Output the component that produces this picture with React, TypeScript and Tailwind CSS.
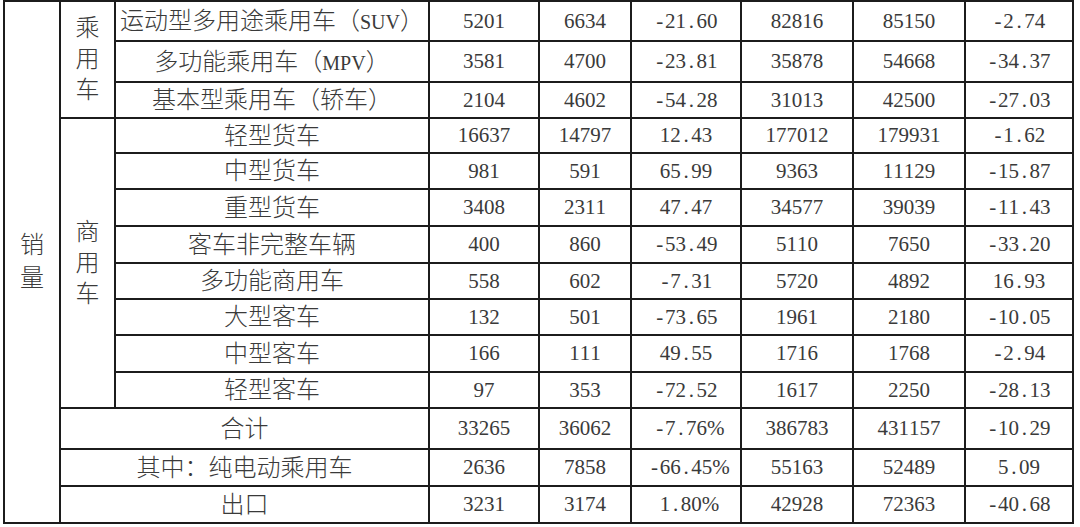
import React from 'react'

type Row = {
    label: React.ReactNode;
    values: string[];
    h: string;
};

// SimSun style half-width: every ascii char takes the same width
function Num({ v }: { v: string }) {
    return (
        <span className="inline-flex">
            {v.split('').map((c, i) => (
                <span key={i} className="inline-block w-[10.5px] text-center">
                    {c}
                </span>
            ))}
        </span>
    )
}

function Stack({ text, lh }: { text: string; lh: string }) {
    return (
        <div className={`flex flex-col items-center ${lh}`}>
            {text.split('').map((c, i) => (
                <span key={i}>{c}</span>
            ))}
        </div>
    )
}

const Latin = ({ t }: { t: string }) => <span className="text-[20px]">{t}</span>

const passenger: Row[] = [
    { label: <>运动型多用途乘用车（<Latin t="SUV" />）</>, values: ['5201', '6634', '-21.60', '82816', '85150', '-2.74'], h: 'h-[40px]' },
    { label: <>多功能乘用车（<Latin t="MPV" />）</>, values: ['3581', '4700', '-23.81', '35878', '54668', '-34.37'], h: 'h-[41px]' },
    { label: <>基本型乘用车（轿车）</>, values: ['2104', '4602', '-54.28', '31013', '42500', '-27.03'], h: 'h-[36px]' },
]

const commercial: Row[] = [
    { label: '轻型货车', values: ['16637', '14797', '12.43', '177012', '179931', '-1.62'], h: 'h-[35px]' },
    { label: '中型货车', values: ['981', '591', '65.99', '9363', '11129', '-15.87'], h: 'h-[36px]' },
    { label: '重型货车', values: ['3408', '2311', '47.47', '34577', '39039', '-11.43'], h: 'h-[37px]' },
    { label: '客车非完整车辆', values: ['400', '860', '-53.49', '5110', '7650', '-33.20'], h: 'h-[37px]' },
    { label: '多功能商用车', values: ['558', '602', '-7.31', '5720', '4892', '16.93'], h: 'h-[36px]' },
    { label: '大型客车', values: ['132', '501', '-73.65', '1961', '2180', '-10.05'], h: 'h-[36px]' },
    { label: '中型客车', values: ['166', '111', '49.55', '1716', '1768', '-2.94'], h: 'h-[37px]' },
    { label: '轻型客车', values: ['97', '353', '-72.52', '1617', '2250', '-28.13'], h: 'h-[36px]' },
]

const totals: Row[] = [
    { label: '合计', values: ['33265', '36062', '-7.76%', '386783', '431157', '-10.29'], h: 'h-[41px]' },
    { label: '其中：纯电动乘用车', values: ['2636', '7858', '-66.45%', '55163', '52489', '5.09'], h: 'h-[37px]' },
    { label: '出口', values: ['3231', '3174', '1.80%', '42928', '72363', '-40.68'], h: 'h-[37px]' },
]

const cell = 'border-2 border-[#1c1c1c] p-0 text-center align-middle'

function Values({ values }: { values: string[] }) {
    return (
        <>
            {values.map((v, i) => (
                <td key={i} className={`${cell} text-[21px]`}>
                    <Num v={v} />
                </td>
            ))}
        </>
    )
}

export default function App() {
    return (
        <div className="w-[1080px] h-[527px] bg-white overflow-hidden pt-0 pl-[3px] text-[#3a3a3a] font-light font-['Liberation_Serif','Noto_Sans_CJK_SC',serif]">
            <table className="border-collapse table-fixed w-[1069px] text-[24px] leading-none">
                <colgroup>
                    <col className="w-[56px]" />
                    <col className="w-[55px]" />
                    <col className="w-[314px]" />
                    <col className="w-[110px]" />
                    <col className="w-[92px]" />
                    <col className="w-[110px]" />
                    <col className="w-[112px]" />
                    <col className="w-[112px]" />
                    <col className="w-[108px]" />
                </colgroup>
                <tbody>
                    {passenger.map((r, i) => (
                        <tr key={'p' + i} className={r.h}>
                            {i === 0 && (
                                <td rowSpan={14} className={cell}>
                                    <Stack text="销量" lh="leading-[33px]" />
                                </td>
                            )}
                            {i === 0 && (
                                <td rowSpan={3} className={cell}>
                                    <Stack text="乘用车" lh="leading-[31px]" />
                                </td>
                            )}
                            <td className={`${cell} whitespace-nowrap`}>{r.label}</td>
                            <Values values={r.values} />
                        </tr>
                    ))}
                    {commercial.map((r, i) => (
                        <tr key={'c' + i} className={r.h}>
                            {i === 0 && (
                                <td rowSpan={8} className={cell}>
                                    <Stack text="商用车" lh="leading-[31px]" />
                                </td>
                            )}
                            <td className={`${cell} whitespace-nowrap`}>{r.label}</td>
                            <Values values={r.values} />
                        </tr>
                    ))}
                    {totals.map((r, i) => (
                        <tr key={'t' + i} className={r.h}>
                            <td colSpan={2} className={`${cell} whitespace-nowrap`}>{r.label}</td>
                            <Values values={r.values} />
                        </tr>
                    ))}
                </tbody>
            </table>
        </div>
    )
}
